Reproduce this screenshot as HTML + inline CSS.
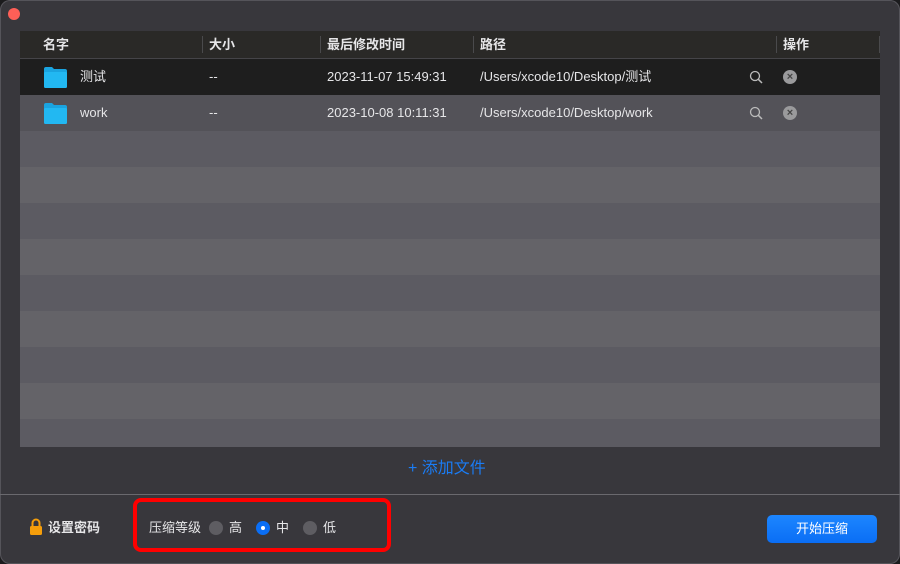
<!DOCTYPE html>
<html><head><meta charset="utf-8"><style>
*{margin:0;padding:0;box-sizing:border-box}
body{width:900px;height:564px;background:#1b1b1d;font-family:"Liberation Sans","Noto Sans CJK SC",sans-serif;overflow:hidden;position:relative;color:#e6e6e8;line-height:16px}
.win{position:absolute;left:0;top:0;width:900px;height:564px;background:#38373c;border-radius:10px;box-shadow:inset 0 0 0 1px #55545a}
.close{position:absolute;left:8px;top:8px;width:12px;height:12px;border-radius:50%;background:#fe5f57}
.tbl{position:absolute;left:20px;top:31px;width:860px;height:416px;overflow:hidden;background:#5c5b62}
.hdr{height:28px;background:#2a2927;border-bottom:1px solid #454448;font-size:13px;font-weight:bold;position:relative}
.hdr span{position:absolute;top:6px}
.sep{position:absolute;top:5px;width:1px;height:17px;background:#4a4a4c}
.row{height:36px;position:relative;font-size:13px}
.row span{position:absolute;top:10px}
.folder{position:absolute;left:23px;top:7px;width:25px;height:22px}
.x{position:absolute;left:763px;top:11px;width:14px;height:14px;border-radius:50%;background:#9a9a9c;color:#444;font-size:11px;line-height:14px;text-align:center;font-weight:bold}
.add{position:absolute;left:408px;top:460px;color:#1a7cf5;font-size:16px;line-height:18px}
.line{position:absolute;left:0;top:494px;width:900px;height:1px;background:#6a696e}
.red{position:absolute;left:133px;top:498px;width:258px;height:54px;border:4px solid #ff0000;border-radius:8px}
.lbl{position:absolute;top:520px;font-size:13px}
.radio{position:absolute;top:521px;width:14px;height:14px;border-radius:50%;background:#5e5d62}
.btn{position:absolute;left:767px;top:515px;width:110px;height:28px;border-radius:5px;background:linear-gradient(#1d86ff,#0a6ef5);color:#fff;font-size:13px;text-align:center;line-height:28px}
</style></head><body>
<div class="win">
<div class="close"></div>
<div class="tbl">
<div class="hdr"><span style="left:23px">名字</span><div class="sep" style="left:182px"></div><span style="left:189px">大小</span><div class="sep" style="left:300px"></div><span style="left:307px">最后修改时间</span><div class="sep" style="left:453px"></div><span style="left:460px">路径</span><div class="sep" style="left:756px"></div><span style="left:763px">操作</span><div class="sep" style="left:859px"></div></div>
<div class="row" style="background:#1e1e1e">
<svg class="folder" viewBox="0 0 25 22"><path d="M1 3 Q1 1 3 1 H9 L11 3 H22 Q24 3 24 5 V20 Q24 22 22 22 H3 Q1 22 1 20Z" fill="#1aa4e0"/><rect x="1" y="6" width="23" height="16" rx="1.5" fill="#22b8f2"/></svg>
<span style="left:60px">测试</span><span style="left:189px">--</span><span style="left:307px">2023-11-07 15:49:31</span><span style="left:460px">/Users/xcode10/Desktop/测试</span>
<svg style="position:absolute;left:729px;top:11px" width="14" height="14" viewBox="0 0 14 14"><circle cx="6" cy="6" r="4.5" fill="none" stroke="#bbb" stroke-width="1.3"/><path d="M9.3 9.3L13 13" stroke="#bbb" stroke-width="1.5"/></svg>
<div class="x">×</div></div>
<div class="row" style="background:#535258">
<svg class="folder" viewBox="0 0 25 22"><path d="M1 3 Q1 1 3 1 H9 L11 3 H22 Q24 3 24 5 V20 Q24 22 22 22 H3 Q1 22 1 20Z" fill="#1aa4e0"/><rect x="1" y="6" width="23" height="16" rx="1.5" fill="#22b8f2"/></svg>
<span style="left:60px">work</span><span style="left:189px">--</span><span style="left:307px">2023-10-08 10:11:31</span><span style="left:460px">/Users/xcode10/Desktop/work</span>
<svg style="position:absolute;left:729px;top:11px" width="14" height="14" viewBox="0 0 14 14"><circle cx="6" cy="6" r="4.5" fill="none" stroke="#bbb" stroke-width="1.3"/><path d="M9.3 9.3L13 13" stroke="#bbb" stroke-width="1.5"/></svg>
<div class="x">×</div></div>
<div class="row" style="background:#5c5b62"></div>
<div class="row" style="background:#646368"></div>
<div class="row" style="background:#5c5b62"></div>
<div class="row" style="background:#646368"></div>
<div class="row" style="background:#5c5b62"></div>
<div class="row" style="background:#646368"></div>
<div class="row" style="background:#5c5b62"></div>
<div class="row" style="background:#646368"></div>
<div class="row" style="background:#5c5b62"></div>
</div>
<div class="add">+ 添加文件</div>
<div class="line"></div>
<svg style="position:absolute;left:29px;top:518px" width="14" height="18" viewBox="0 0 14 18"><path d="M3.5 8V5a3.5 3.5 0 0 1 7 0v3" fill="none" stroke="#f59e0b" stroke-width="2"/><rect x="1" y="8" width="12" height="9" rx="1.5" fill="#f59e0b"/></svg>
<div class="lbl" style="left:48px;font-weight:bold">设置密码</div>
<div class="red"></div>
<div class="lbl" style="left:149px">压缩等级</div>
<div class="radio" style="left:209px"></div><div class="lbl" style="left:229px">高</div>
<div class="radio" style="left:256px;background:#0a6ef5"><div style="position:absolute;left:5px;top:5px;width:4px;height:4px;border-radius:50%;background:#fff"></div></div><div class="lbl" style="left:276px">中</div>
<div class="radio" style="left:303px"></div><div class="lbl" style="left:323px">低</div>
<div class="btn">开始压缩</div>
</div>
</body></html>
